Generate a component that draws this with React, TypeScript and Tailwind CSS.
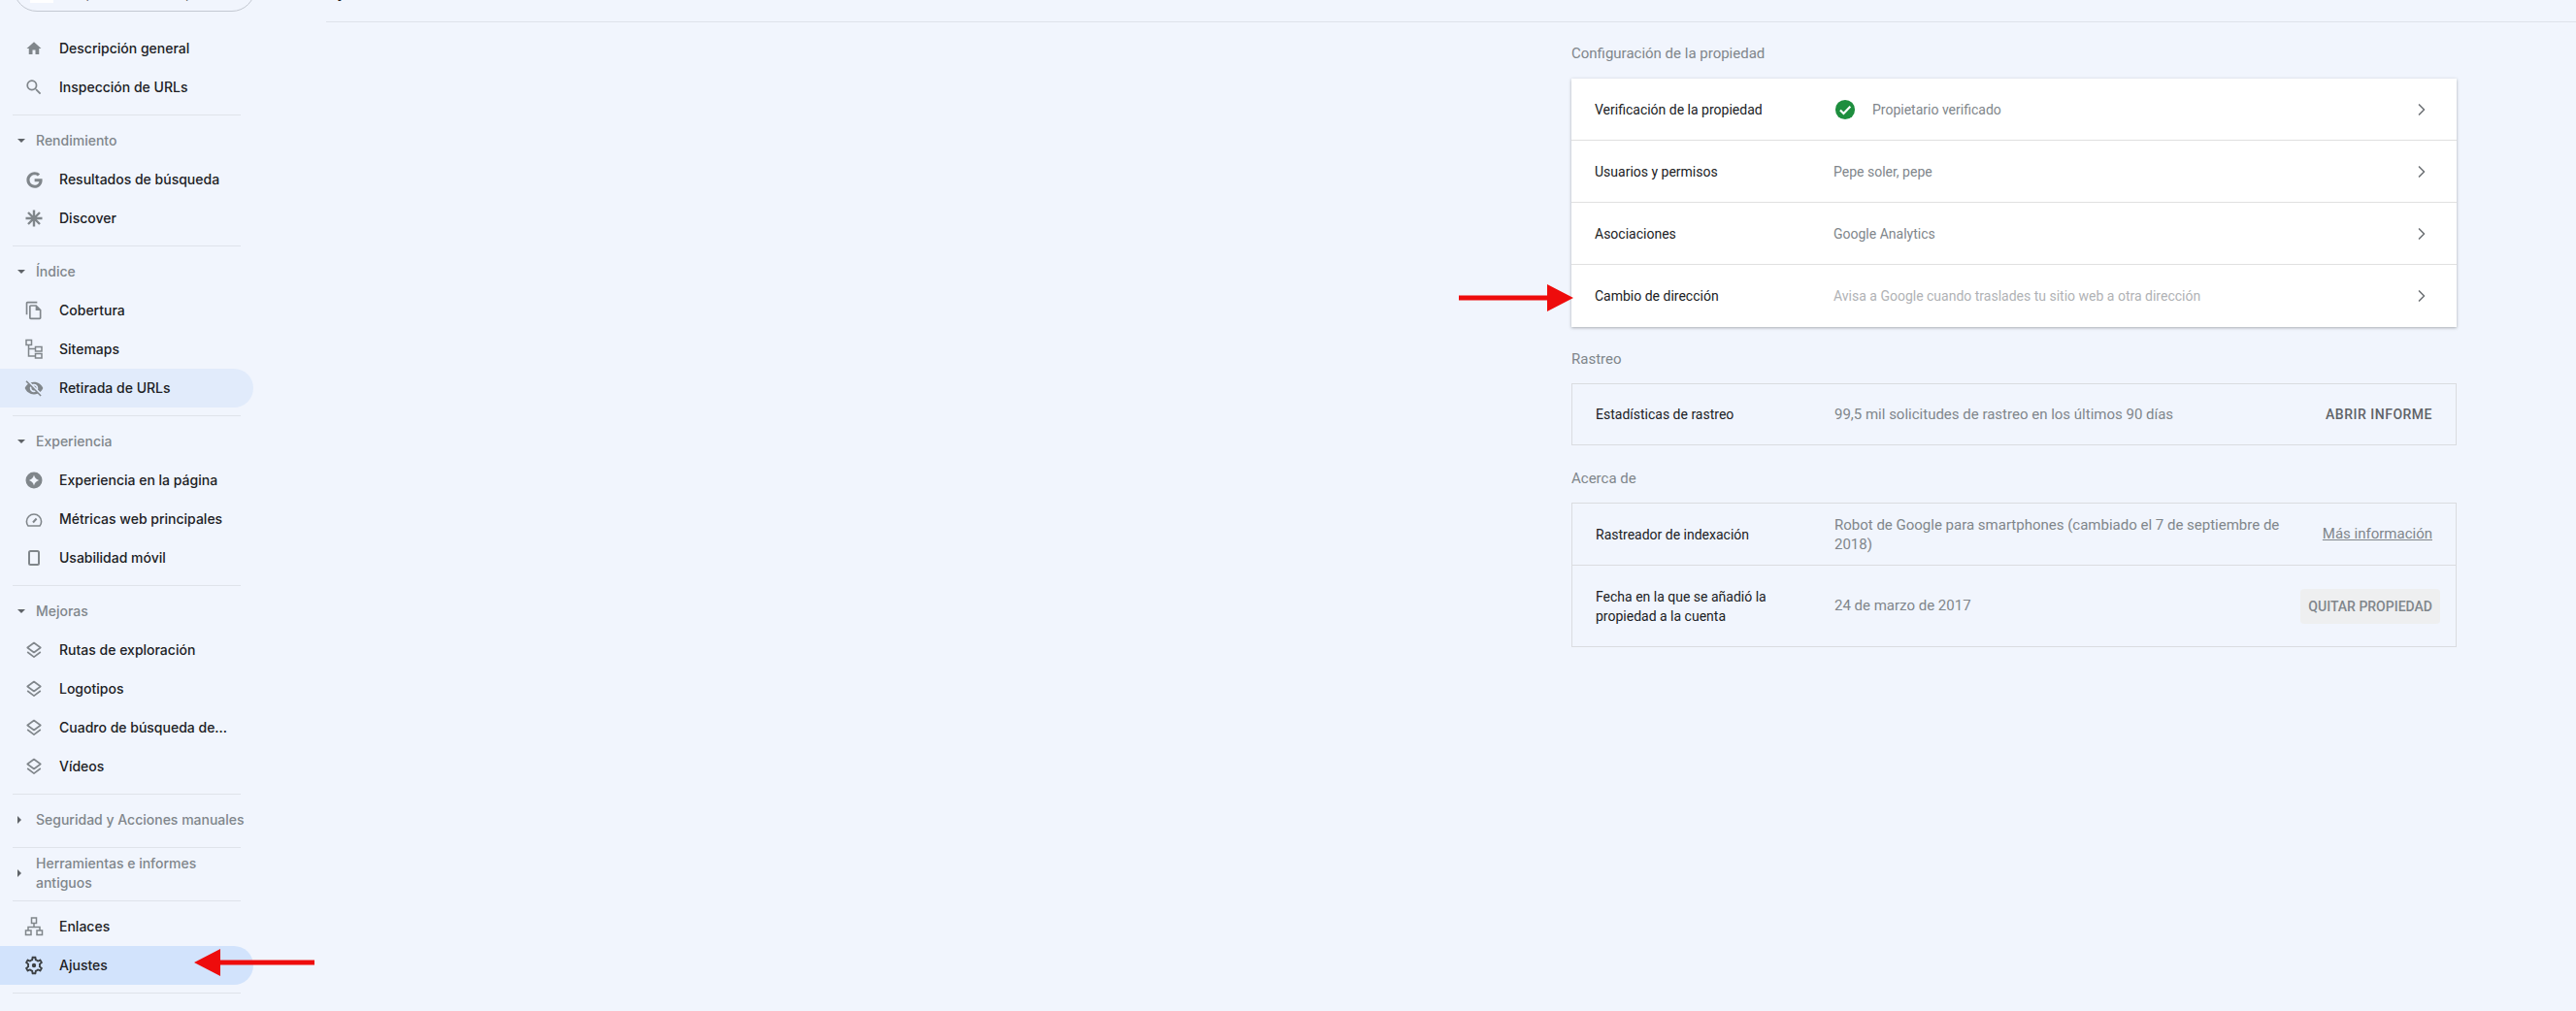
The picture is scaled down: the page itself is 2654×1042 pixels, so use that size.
import { ReactNode } from "react"
import { FaGoogle } from "react-icons/fa"
import { ChevronRight } from "lucide-react"

// material paths are a bit larger than the ones in the nav, k shrinks them around the centre
const p = (d: string, k = 1) => <path d={d} fill="currentColor" transform={`translate(12 12) scale(${k}) translate(-12 -12)`} />

const icons: Record<string, ReactNode> = {
  home: p("M10 20v-6h4v6h5v-8h3L12 3 2 12h3v8z", 0.75),
  search: p(
    "M15.5 14h-.79l-.28-.27A6.471 6.471 0 0 0 16 9.5 6.5 6.5 0 1 0 9.5 16c1.61 0 3.09-.59 4.23-1.57l.27.28v.79l5 4.99L20.49 19l-4.99-5zm-6 0C7.01 14 5 11.99 5 9.5S7.01 5 9.5 5 14 7.01 14 9.5 11.99 14 9.5 14z",
    0.85
  ),
  star: (
    <g stroke="currentColor" strokeWidth="2.4">
      <path d="M12 3.5v17M3.5 12h17M6 6l12 12M18 6L6 18" />
    </g>
  ),
  copy: p(
    "M16 1H4c-1.1 0-2 .9-2 2v14h2V3h12V1zm-1 4H8c-1.1 0-1.99.9-1.99 2L6 21c0 1.1.89 2 1.99 2H19c1.1 0 2-.9 2-2V11l-6-6zM8 21V7h6v5h5v9H8z",
    0.83
  ),
  sitemap: (
    <g fill="none" stroke="currentColor" strokeWidth="1.5">
      <rect x="4" y="2.5" width="5.5" height="5" />
      <rect x="13.5" y="9.5" width="6.5" height="4.5" />
      <rect x="13.5" y="16.5" width="6.5" height="4.5" />
      <path d="M6.5 7.5V19h7M6.5 11.5h7" />
    </g>
  ),
  eyeOff: p(
    "M12 7c2.76 0 5 2.24 5 5 0 .65-.13 1.26-.36 1.83l2.92 2.92c1.51-1.26 2.7-2.89 3.43-4.75-1.73-4.39-6-7.5-11-7.5-1.4 0-2.74.25-3.98.7l2.16 2.16C10.74 7.13 11.35 7 12 7zM2 4.27l2.28 2.28.46.46C3.08 8.3 1.78 10.02 1 12c1.73 4.39 6 7.5 11 7.5 1.55 0 3.03-.3 4.38-.84l.42.42L19.73 22 21 20.73 3.27 3 2 4.27zM7.53 9.8l1.55 1.55c-.05.21-.08.43-.08.65 0 1.66 1.34 3 3 3 .22 0 .44-.03.65-.08l1.55 1.55c-.67.33-1.41.53-2.2.53-2.76 0-5-2.24-5-5 0-.79.2-1.53.53-2.2zm4.31-.78l3.15 3.15.02-.16c0-1.66-1.34-3-3-3l-.17.01z",
    0.85
  ),
  page: p("M12 2a10 10 0 1 0 0 20 10 10 0 0 0 0-20zm0 3.5c.7 3.2 2.2 5.1 6 6.5-3.8 1.4-5.3 3.3-6 6.5-.7-3.2-2.2-5.1-6-6.5 3.8-1.4 5.3-3.3 6-6.5z", 0.85),
  gauge: (
    <g fill="none" stroke="currentColor" strokeWidth="1.6">
      <path d="M6 19h12c1-1.2 1.600-2.800 1.600-4.500C19.600 10.400 16.200 7 12 7s-7.600 3.400-7.600 7.500c0 1.700.6 3.300 1.600 4.500z" />
      <path d="M11 15.500l3.600-4" strokeWidth="2" />
    </g>
  ),
  phone: <rect x="7" y="5" width="10" height="14" rx="1.5" fill="none" stroke="currentColor" strokeWidth="2" />,
  layers: (
    <g fill="none" stroke="currentColor" strokeWidth="1.6" strokeLinejoin="round">
      <path d="M12 4.500l6.800 5-6.800 5-6.800-5z" />
      <path d="M5.200 14l6.800 5.200 6.800-5.200" />
    </g>
  ),
  links: (
    <g fill="none" stroke="currentColor" strokeWidth="1.5">
      <rect x="9.5" y="3" width="5" height="5.5" />
      <rect x="3.500" y="16" width="5.500" height="4.500" />
      <rect x="15" y="16" width="5.500" height="4.500" />
      <path d="M12 8.500v4M6 16v-3.500h12V16" />
    </g>
  ),
  gear: (
    <>
      {p(
        "M19.43 12.98c.04-.32.07-.64.07-.98 0-.34-.03-.66-.07-.98l2.11-1.65c.19-.15.24-.42.12-.64l-2-3.46c-.09-.16-.26-.25-.44-.25-.06 0-.12.01-.17.03l-2.49 1c-.52-.4-1.08-.73-1.69-.98l-.38-2.65C14.46 2.18 14.25 2 14 2h-4c-.25 0-.46.18-.49.42l-.38 2.65c-.61.25-1.17.59-1.69.98l-2.49-1c-.06-.02-.12-.03-.18-.03-.17 0-.34.09-.43.25l-2 3.46c-.13.22-.07.49.12.64l2.11 1.65c-.04.32-.07.65-.07.98 0 .33.03.66.07.98l-2.11 1.65c-.19.15-.24.42-.12.64l2 3.46c.09.16.26.25.44.25.06 0 .12-.01.17-.03l2.49-1c.52.4 1.08.73 1.69.98l.38 2.65c.03.24.24.42.49.42h4c.25 0 .46-.18.49-.42l.38-2.65c.61-.25 1.17-.59 1.69-.98l2.49 1c.06.02.12.03.18.03.17 0 .34-.09.43-.25l2-3.46c.12-.22.07-.49-.12-.64l-2.11-1.65zm-1.98-1.71c.04.31.05.52.05.73 0 .21-.02.43-.05.73l-.14 1.13.89.7 1.08.84-.7 1.21-1.27-.51-1.04-.42-.9.68c-.43.32-.84.56-1.25.73l-1.06.43-.16 1.13-.2 1.35h-1.4l-.19-1.35-.16-1.13-1.06-.43c-.43-.18-.83-.41-1.23-.71l-.91-.7-1.06.43-1.27.51-.7-1.21 1.08-.84.89-.7-.14-1.13c-.03-.31-.05-.54-.05-.74s.02-.43.05-.73l.14-1.13-.89-.7-1.08-.84.7-1.21 1.27.51 1.04.42.9-.68c.43-.32.84-.56 1.25-.73l1.06-.43.16-1.13.2-1.35h1.39l.19 1.35.16 1.13 1.06.43c.43.18.83.41 1.23.71l.91.7 1.06-.43 1.27-.51.7 1.21-1.07.85-.89.7.14 1.13z",
        0.92
      )}
      <circle cx="12" cy="12" r="2.2" fill="currentColor" />
    </>
  ),
}

function NavRow({ icon, label, bg = "", dark = false }: { icon: string; label: string; bg?: string; dark?: boolean }) {
  return (
    <div className={`flex h-10 w-[261px] items-center rounded-r-full pl-[23px] ${bg}`}>
      {icon === "google" ? (
        <span className="flex h-6 w-6 items-center justify-center text-[#80868b]">
          <FaGoogle size={17} />
        </span>
      ) : (
        <svg viewBox="0 0 24 24" className={`h-6 w-6 ${dark ? "text-[#3c4043]" : "text-[#80868b]"}`}>
          {icons[icon]}
        </svg>
      )}
      <span className="ml-[14px] text-sm font-medium text-[#202124]">{label}</span>
    </div>
  )
}

function Group({ label, open = true, children }: { label: ReactNode; open?: boolean; children?: ReactNode }) {
  return (
    <div className="pt-[6px] pb-2">
      <div className="flex min-h-10 w-[250px] items-center pl-[18px] text-sm font-medium leading-5 text-[#80868b]">
        <span className="flex w-[19px] shrink-0">
          {open ? (
            <span className="h-0 w-0 border-x-4 border-t-4 border-x-transparent border-t-[#5f6368]" />
          ) : (
            <span className="h-0 w-0 border-y-4 border-l-4 border-y-transparent border-l-[#5f6368]" />
          )}
        </span>
        <span className="whitespace-nowrap">{label}</span>
      </div>
      {children}
    </div>
  )
}

const Divider = () => <div className="ml-[13px] h-px w-[235px] bg-[#dfe3ea]" />

function Sidebar() {
  return (
    <aside className="-mt-9 w-[336px] shrink-0 font-[Inter,sans-serif]">
      <div className="mb-[18px] ml-[14px] flex h-12 w-[249px] items-end rounded-3xl border border-[#c4c9d2] pb-[8px] pl-4">
        <span className="h-8 w-6 bg-white" />
        <span className="ml-[14px] text-sm leading-5 text-[#3c4043]">Inspeccionar cualquier URL</span>
      </div>
      <div className="pb-2">
        <NavRow icon="home" label="Descripción general" />
        <NavRow icon="search" label="Inspección de URLs" />
      </div>
      <Divider />
      <Group label="Rendimiento">
        <NavRow icon="google" label="Resultados de búsqueda" />
        <NavRow icon="star" label="Discover" />
      </Group>
      <Divider />
      <Group label="Índice">
        <NavRow icon="copy" label="Cobertura" />
        <NavRow icon="sitemap" label="Sitemaps" />
        <NavRow icon="eyeOff" label="Retirada de URLs" bg="bg-[#e1ebfb]" />
      </Group>
      <Divider />
      <Group label="Experiencia">
        <NavRow icon="page" label="Experiencia en la página" />
        <NavRow icon="gauge" label="Métricas web principales" />
        <NavRow icon="phone" label="Usabilidad móvil" />
      </Group>
      <Divider />
      <Group label="Mejoras">
        <NavRow icon="layers" label="Rutas de exploración" />
        <NavRow icon="layers" label="Logotipos" />
        <NavRow icon="layers" label="Cuadro de búsqueda de..." />
        <NavRow icon="layers" label="Vídeos" />
      </Group>
      <Divider />
      <Group label="Seguridad y Acciones manuales" open={false} />
      <Divider />
      <Group
        open={false}
        label={
          <>
            Herramientas e informes
            <br />
            antiguos
          </>
        }
      />
      <Divider />
      <div className="pt-[6px] pb-2">
        <NavRow icon="links" label="Enlaces" />
        <NavRow icon="gear" label="Ajustes" bg="bg-[#d2e3fc]" dark />
      </div>
      <Divider />
    </aside>
  )
}

function SettingRow({ label, value, light = false, check = false }: { label: string; value: string; light?: boolean; check?: boolean }) {
  return (
    <div className="flex h-16 items-center border-b border-[#e0e0e0] pr-[26px] last:border-b-0">
      <span className="w-[270px] shrink-0 pl-6 text-sm text-[#202124]">{label}</span>
      {check && (
        <svg viewBox="0 0 24 24" className="mr-[17px] ml-[1px] h-[22px] w-[22px]">
          <circle cx="12" cy="12" r="11" fill="#1e8e3e" />
          <path d="M6.5 12.5l3.800 3.800 7.500-7.800" fill="none" stroke="#fff" strokeWidth="2.4" />
        </svg>
      )}
      <span className={`flex-1 text-sm ${light ? "text-[#b0b2b5]" : "text-[#80868b]"}`}>{value}</span>
      <ChevronRight size={20} strokeWidth={2} className="text-[#6f7377]" />
    </div>
  )
}

function Main() {
  return (
    <main className="min-w-0 flex-1 font-[Roboto,sans-serif]">
      <header className="flex h-[23px] items-end overflow-hidden border-b border-[#dfe3ea] pb-[18px]">
        <h1 className="text-xl leading-7 text-[#202124]">Ajustes</h1>
      </header>
      <div className="mr-[123px] ml-auto w-[912px]">
        <h2 className="mt-[22px] mb-[16px] text-[15px] leading-5 text-[#80868b]">Configuración de la propiedad</h2>
        <div className="bg-white shadow-[0_1px_3px_rgba(60,64,67,0.4)]">
          <SettingRow label="Verificación de la propiedad" value="Propietario verificado" check />
          <SettingRow label="Usuarios y permisos" value="Pepe soler, pepe" />
          <SettingRow label="Asociaciones" value="Google Analytics" />
          <SettingRow label="Cambio de dirección" value="Avisa a Google cuando traslades tu sitio web a otra dirección" light />
        </div>

        <h2 className="mt-[23px] mb-[15px] text-[15px] leading-5 text-[#80868b]">Rastreo</h2>
        <div className="flex h-16 items-center border border-[#dadce0] pr-6">
          <span className="w-[270px] shrink-0 pl-6 text-sm text-[#202124]">Estadísticas de rastreo</span>
          <span className="flex-1 text-[15px] text-[#80868b]">99,5 mil solicitudes de rastreo en los últimos 90 días</span>
          <span className="text-sm font-medium tracking-[0.5px] text-[#5f6368]">ABRIR INFORME</span>
        </div>

        <h2 className="mt-[24px] mb-[15px] text-[15px] leading-5 text-[#80868b]">Acerca de</h2>
        <div className="border border-[#dadce0]">
          <div className="flex h-16 items-center border-b border-[#dadce0] pr-6">
            <span className="w-[270px] shrink-0 pl-6 text-sm text-[#202124]">Rastreador de indexación</span>
            <span className="flex-1 pr-[30px] text-[15px] leading-5 text-[#80868b]">
              Robot de Google para smartphones (cambiado el 7 de septiembre de 2018)
            </span>
            <span className="shrink-0 text-[15px] text-[#80868b] underline">Más información</span>
          </div>
          <div className="flex h-[83px] items-center pr-4">
            <span className="w-[270px] shrink-0 pr-4 pl-6 text-sm leading-5 text-[#202124]">
              Fecha en la que se añadió la propiedad a la cuenta
            </span>
            <span className="flex-1 text-[15px] text-[#80868b]">24 de marzo de 2017</span>
            <span className="flex h-9 items-center rounded bg-[#eeeff0] px-2 text-sm font-medium text-[#80868b]">QUITAR PROPIEDAD</span>
          </div>
        </div>
      </div>
    </main>
  )
}

export default function App() {
  return (
    <div className="relative flex h-[1042px] overflow-hidden bg-[#f1f5fd]">
      <Sidebar />
      <Main />
      {/* the two red annotation arrows pasted on top of the screenshot */}
      <svg viewBox="0 0 118 28" className="absolute top-[293px] left-[1503px] h-7 w-[118px]">
        <path d="M0 11.500h91V0l27 14-27 14V16.500H0z" fill="#ee0c0c" />
      </svg>
      <svg viewBox="0 0 124 28" className="absolute top-[978px] left-[200px] h-7 w-[124px]">
        <path d="M124 11.500H27V0L0 14l27 14V16.500h97z" fill="#ee0c0c" />
      </svg>
    </div>
  )
}
